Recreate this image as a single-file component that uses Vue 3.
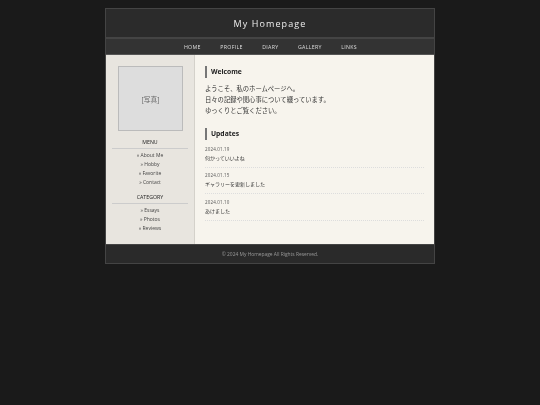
<script setup>
const nav = ['HOME', 'PROFILE', 'DIARY', 'GALLERY', 'LINKS']
const menu = ['About Me', 'Hobby', 'Favorite', 'Contact']
const category = ['Essays', 'Photos', 'Reviews']
const updates = [
  { date: '2024.01.19', text: '何かっていいよね' },
  { date: '2024.01.15', text: 'ギャラリーを更新しました' },
  { date: '2024.01.10', text: 'あけました' }
]
</script>

<template>
  <div class="page">
    <div class="wrap">
      <header class="head"><h1>My Homepage</h1></header>
      <nav class="nav">
        <a v-for="n in nav" :key="n">{{ n }}</a>
      </nav>
      <div class="main">
        <aside class="side">
          <div class="photo">[写真]</div>
          <h3>MENU</h3>
          <ul>
            <li v-for="m in menu" :key="m">» {{ m }}</li>
          </ul>
          <h3 class="second">CATEGORY</h3>
          <ul>
            <li v-for="c in category" :key="c">» {{ c }}</li>
          </ul>
        </aside>
        <section class="content">
          <h2>Welcome</h2>
          <p class="intro">ようこそ、私のホームページへ。<br>日々の記録や関心事について綴っています。<br>ゆっくりとご覧ください。</p>
          <h2 class="updates">Updates</h2>
          <div v-for="u in updates" :key="u.date" class="item">
            <div class="date">{{ u.date }}</div>
            <div class="text">{{ u.text }}</div>
          </div>
        </section>
      </div>
      <footer class="foot">© 2024 My Homepage All Rights Reserved.</footer>
    </div>
  </div>
</template>

<style>
html, body { margin: 0; background: #1a1a1a; }
</style>

<style scoped>
.page {
  width: 540px;
  height: 405px;
  padding-top: 8px;
  box-sizing: border-box;
  background: #1a1a1a;
  font-family: "Open Sans", "Noto Sans CJK JP", sans-serif;
}
.wrap {
  width: 330px;
  margin: 0 auto;
  box-sizing: border-box;
  border: 1px solid #444;
  background: #2a2a2a;
  filter: blur(0.15px);
}
.head {
  height: 28px;
  background: #2b2b2b;
  border-bottom: 2px solid #444;
  display: flex;
  align-items: center;
  justify-content: center;
}
h1 {
  margin: 0;
  font-size: 9px;
  font-weight: 400;
  letter-spacing: 1.1px;
  color: #eee;
}
.nav {
  height: 15px;
  background: #333;
  border-bottom: 1px solid #555;
  display: flex;
  justify-content: center;
  align-items: center;
  gap: 19.5px;
  padding-left: 1px;
}
.nav a {
  font-size: 5.25px;
  letter-spacing: 0.3px;
  color: #ddd;
}
.main {
  display: flex;
  height: 189px;
  background: #f7f4ed;
}
.side {
  width: 89px;
  flex: none;
  box-sizing: border-box;
  background: #e8e5df;
  border-right: 1px solid #d4d1ca;
  padding: 11px 6px 0;
}
.photo {
  width: 65px;
  height: 65px;
  margin: 0 0 7px 6px;
  box-sizing: border-box;
  background: #ddd;
  border: 1px solid #bbb;
  display: flex;
  align-items: center;
  justify-content: center;
  font-size: 6.75px;
  color: #666;
}
h3 {
  margin: 0 0 2px;
  padding-bottom: 1.5px;
  border-bottom: 1px solid #ccc;
  font-size: 5.25px;
  line-height: 8px;
  font-weight: 400;
  text-align: center;
  color: #222;
}
h3.second { margin-top: 5.5px; }
ul { margin: 0; padding: 0; list-style: none; }
li {
  height: 9.3px;
  line-height: 9.3px;
  text-align: center;
  font-size: 5px;
  color: #444;
}
.content {
  flex: 1;
  padding: 11px 10px 0;
}
h2 {
  margin: 0 0 5px;
  padding-left: 4px;
  border-left: 2px solid #777;
  font-size: 6.75px;
  line-height: 12px;
  font-weight: 700;
  color: #222;
}
.intro {
  margin: 0;
  font-size: 6.3px;
  line-height: 11px;
  color: #333;
}
h2.updates { margin-top: 12px; margin-bottom: 5.5px; }
.item {
  height: 22px;
  margin-bottom: 4.6px;
  box-sizing: border-box;
  border-bottom: 1px dotted #ddd;
}
.date {
  font-size: 4.5px;
  line-height: 7px;
  color: #555;
  letter-spacing: 0.15px;
}
.text {
  margin-top: 1px;
  font-size: 5px;
  line-height: 9px;
  color: #333;
}
.foot {
  height: 18px;
  background: #2a2a2a;
  border-top: 1px solid #444;
  display: flex;
  align-items: center;
  justify-content: center;
  font-size: 4.9px;
  color: #999;
}
</style>
